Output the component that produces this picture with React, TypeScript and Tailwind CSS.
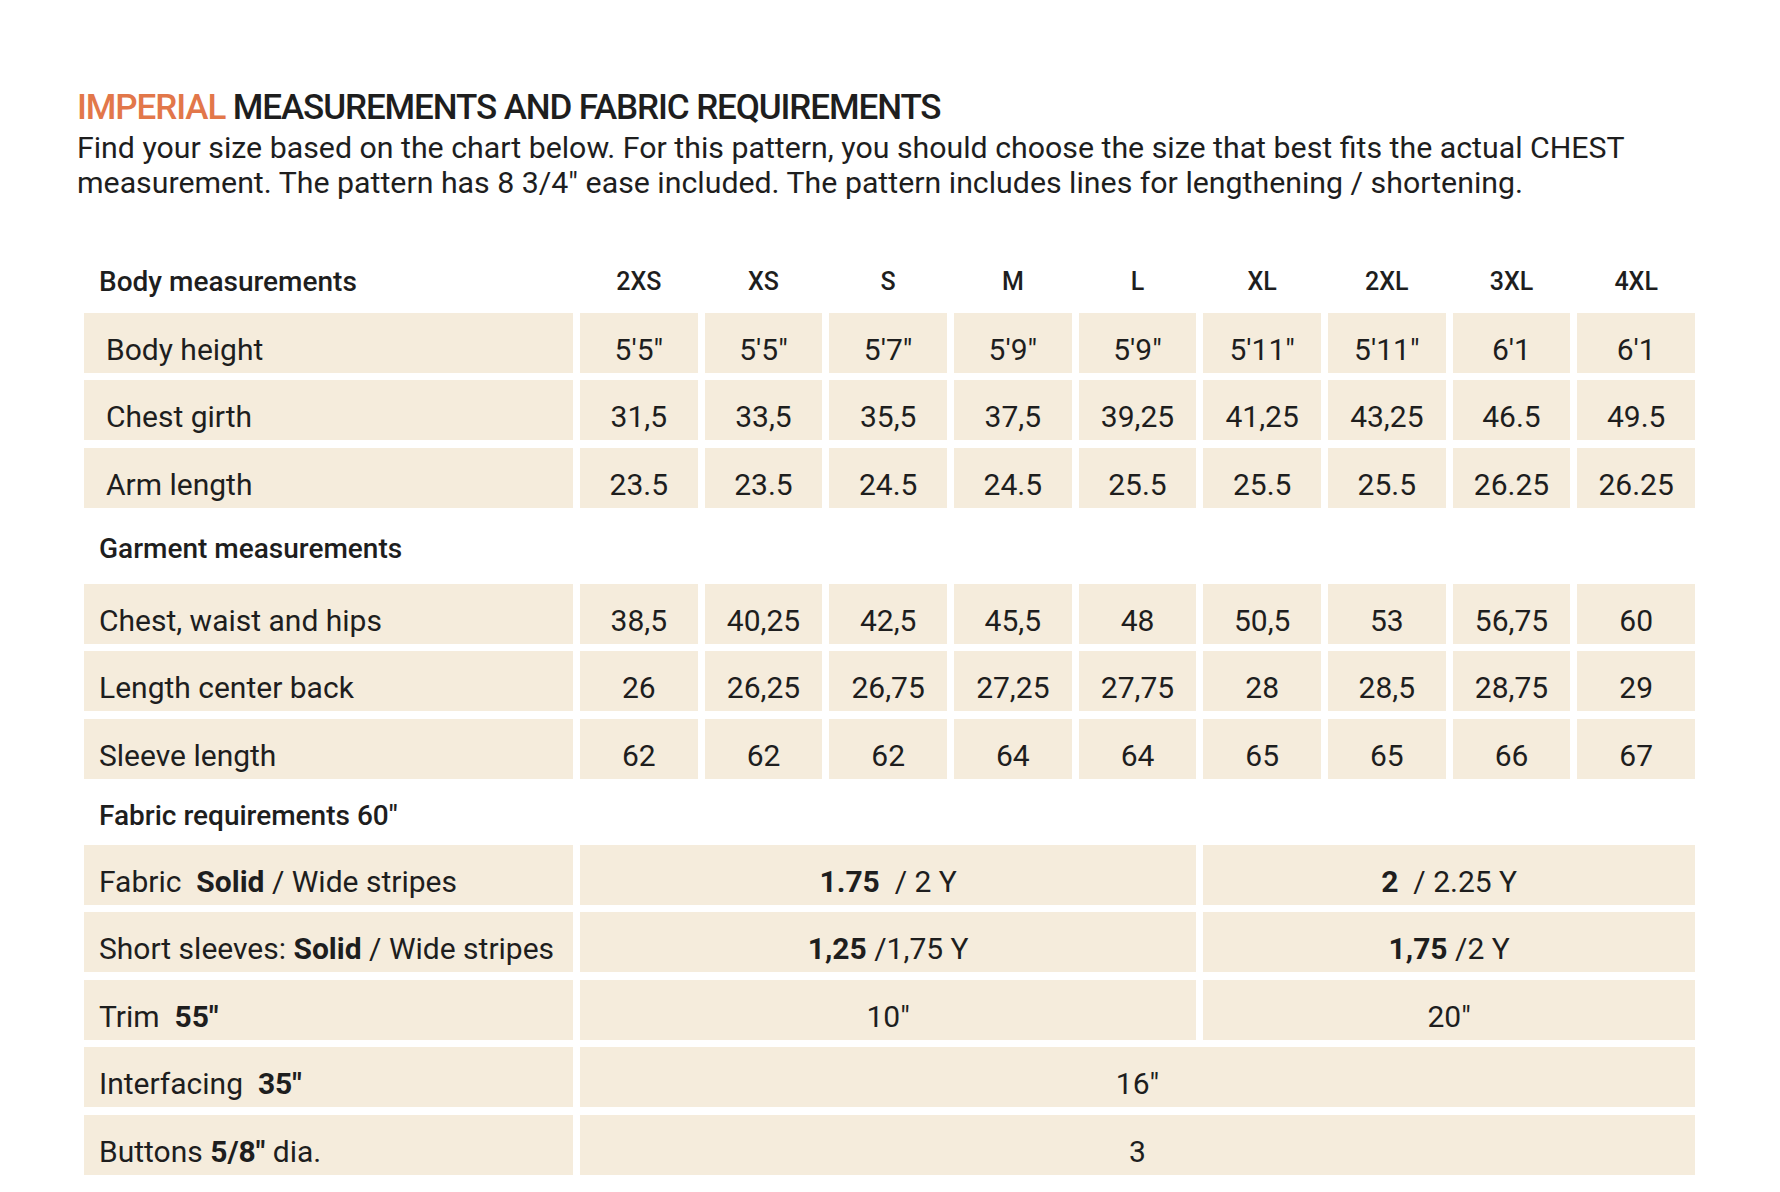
import React from 'react';

const sizes = ['2XS', 'XS', 'S', 'M', 'L', 'XL', '2XL', '3XL', '4XL'];

const bodyRows: { label: string; values: string[] }[] = [
  { label: 'Body height', values: ['5\'5"', '5\'5"', '5\'7"', '5\'9"', '5\'9"', '5\'11"', '5\u203211\u2033', '6\u20321', '6\u20321'] },
  { label: 'Chest girth', values: ['31,5', '33,5', '35,5', '37,5', '39,25', '41,25', '43,25', '46.5', '49.5'] },
  { label: 'Arm length', values: ['23.5', '23.5', '24.5', '24.5', '25.5', '25.5', '25.5', '26.25', '26.25'] },
];

const garmentRows: { label: string; values: string[] }[] = [
  { label: 'Chest, waist and hips', values: ['38,5', '40,25', '42,5', '45,5', '48', '50,5', '53', '56,75', '60'] },
  { label: 'Length center back', values: ['26', '26,25', '26,75', '27,25', '27,75', '28', '28,5', '28,75', '29'] },
  { label: 'Sleeve length', values: ['62', '62', '62', '64', '64', '65', '65', '66', '67'] },
];

const cell = 'bg-[#f5ecdc] h-[60px] pt-[13px] flex items-center';

function LabelCell({ children, indent = false }: { children: React.ReactNode; indent?: boolean }) {
  return (
    <div className={`${cell} whitespace-pre ${indent ? 'pl-[22px]' : 'pl-[15px]'}`}>
      {children}
    </div>
  );
}

function ValueCell({ children, span = '' }: { children: React.ReactNode; span?: string }) {
  return <div className={`${cell} justify-center whitespace-pre ${span}`}>{children}</div>;
}

export default function App() {
  return (
    <div
      className="min-h-[1192px] w-[1780px] bg-white text-[#1e1e1e]"
      style={{ fontFamily: 'Roboto, "Liberation Sans", sans-serif' }}
    >
      <div className="pl-[77px] pt-[88px]">
        <h1 className="text-[35px] leading-[40px] uppercase font-medium tracking-[-1.1px]">
          <span className="text-[#e2774a]">Imperial</span> Measurements and Fabric Requirements
        </h1>
        <p className="mt-[2px] text-[30.3px] leading-[35px] w-[1690px]">
          Find your size based on the chart below. For this pattern, you should choose the size that best fits the actual CHEST
          <br />
          measurement. The pattern has 8 3/4{'\u2033'} ease included. The pattern includes lines for lengthening / shortening.
        </p>
      </div>

      <div className="ml-[84px] mt-[55px] w-[1611px] grid grid-cols-[489px_repeat(9,1fr)] gap-x-[7px] gap-y-[7.5px] text-[30px]">
        {/* Body measurements */}
        <div className="h-[50px] pt-[4px] flex items-center pl-[15px] text-[28px] font-medium">Body measurements</div>
        {sizes.map((s) => (
          <div key={s} className="h-[50px] pt-[4px] flex items-center justify-center text-[25px] font-medium">
            {s}
          </div>
        ))}
        {bodyRows.map((r) => (
          <React.Fragment key={r.label}>
            <LabelCell indent>{r.label}</LabelCell>
            {r.values.map((v, i) => (
              <ValueCell key={i}>{v}</ValueCell>
            ))}
          </React.Fragment>
        ))}

        {/* Garment measurements */}
        <div className="col-span-10 h-[61px] pt-[6px] flex items-center pl-[15px] text-[28px] font-medium">
          Garment measurements
        </div>
        {garmentRows.map((r) => (
          <React.Fragment key={r.label}>
            <LabelCell>{r.label}</LabelCell>
            {r.values.map((v, i) => (
              <ValueCell key={i}>{v}</ValueCell>
            ))}
          </React.Fragment>
        ))}

        {/* Fabric requirements */}
        <div className="col-span-10 h-[51px] pt-[8px] flex items-center pl-[15px] text-[28px] font-medium">
          Fabric requirements 60{'\u2033'}
        </div>

        <LabelCell>
          Fabric  <b className="font-bold">Solid</b> / Wide stripes
        </LabelCell>
        <ValueCell span="col-span-5">
          <b className="font-bold">1.75</b>  / 2 Y
        </ValueCell>
        <ValueCell span="col-span-4">
          <b className="font-bold">2</b>  / 2.25 Y
        </ValueCell>

        <LabelCell>
          Short sleeves: <b className="font-bold">Solid</b> / Wide stripes
        </LabelCell>
        <ValueCell span="col-span-5">
          <b className="font-bold">1,25</b> /1,75 Y
        </ValueCell>
        <ValueCell span="col-span-4">
          <b className="font-bold">1,75</b> /2 Y
        </ValueCell>

        <LabelCell>
          Trim  <b className="font-bold">55{'\u2033'}</b>
        </LabelCell>
        <ValueCell span="col-span-5">10{'\u2033'}</ValueCell>
        <ValueCell span="col-span-4">20{'\u2033'}</ValueCell>

        <LabelCell>
          Interfacing  <b className="font-bold">35{'\u2033'}</b>
        </LabelCell>
        <ValueCell span="col-span-9">16{'\u2033'}</ValueCell>

        <LabelCell>
          Buttons <b className="font-bold">5/8{'\u2033'}</b> dia.
        </LabelCell>
        <ValueCell span="col-span-9">3</ValueCell>
      </div>
    </div>
  );
}
